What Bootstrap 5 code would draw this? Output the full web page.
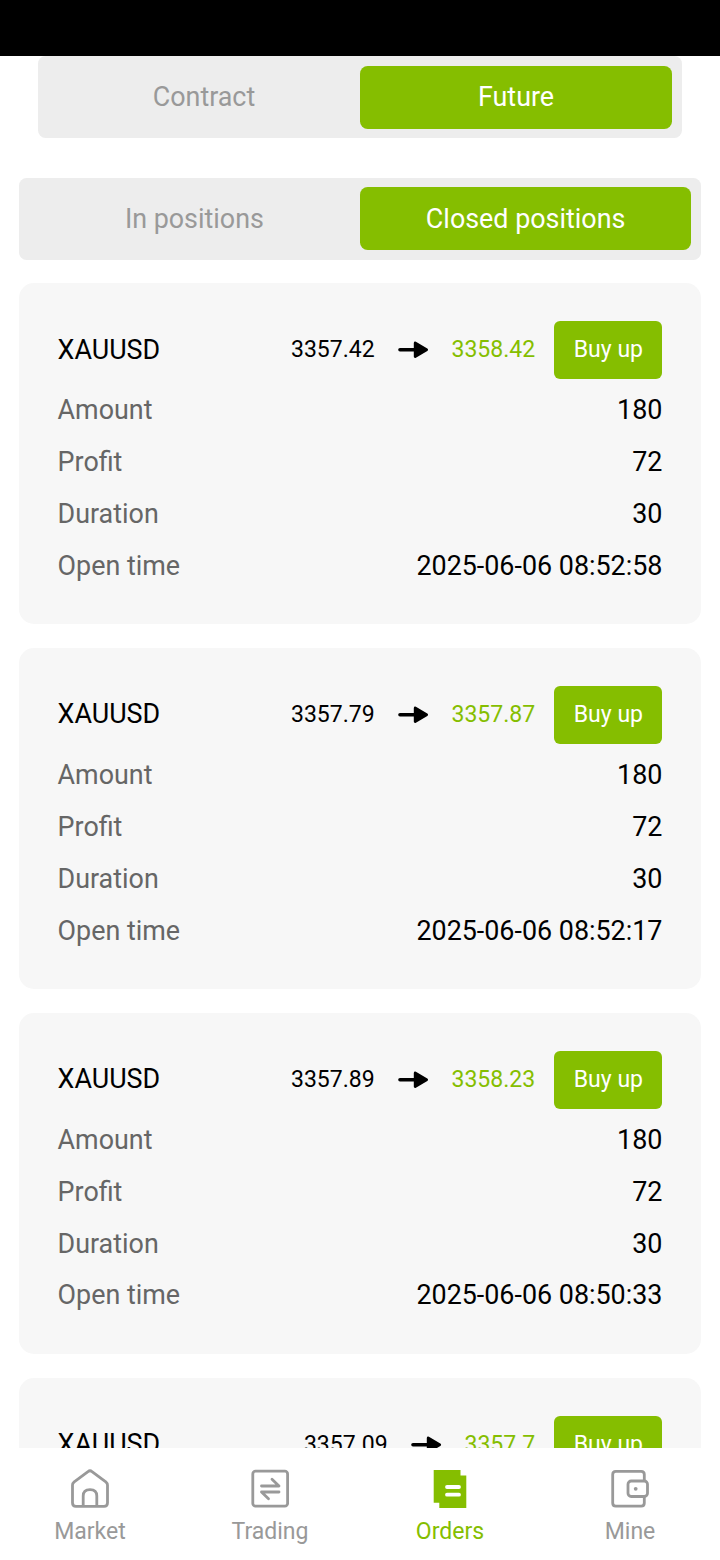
<!DOCTYPE html>
<html lang="en">
<head>
<meta charset="utf-8">
<meta name="viewport" content="width=device-width, initial-scale=1">
<title>Orders</title>
<link href="https://cdn.jsdelivr.net/npm/bootstrap@5.3.0/dist/css/bootstrap.min.css" rel="stylesheet">
<style>
  :root { --lime: #85be00; }
  body { font-family: Roboto, sans-serif; font-size: 26.88px; line-height: 1.2; color: #000; background: #fff; }
  .screen { height: 1560px; }
  .status-strip { height: 56.3px; background: #000; }
  .segmented { height: 82.2px; padding: 9.6px; background: #ededed; border-radius: 7.7px; color: #999; }
  .segmented.inset { margin: 0 19.2px 39.2px; }
  .segmented .on { background: var(--lime); color: #fff; border-radius: 7.7px; }
  .feed { padding: 0 19.2px; }
  .order { height: 341px; margin-top: 23.8px; padding: 38px 38.4px 0; background: #f7f7f7; border-radius: 15px; }
  .order:first-child { margin-top: 23.5px; }
  .order-head { height: 57.6px; margin-bottom: 5.6px; }
  .order-head > .me-auto { margin-top: -1px; }
  .price { font-size: 23.04px; }
  .arrow { width: 32px; height: 20px; margin: 0 22.4px; }
  .side { font-size: 23.04px; height: 57.6px; width: 108px; margin-left: 19.2px; background: var(--lime); color: #fff; border-radius: 6px; }
  .field { height: 51.84px; }
  .field dt { color: #666; font-weight: 400; }
  .field dd { margin: 0; }
  .tabs { height: 112px; background: #fff; color: #999; font-size: 23.04px; padding-top: 19px; }
  .tabs svg { width: 44px; height: 44px; margin-bottom: 7px; }
  .lime { color: var(--lime); }
</style>
</head>
<body>
<div class="screen d-flex flex-column overflow-hidden">
  <div class="status-strip flex-shrink-0"></div>
  <main class="feed flex-grow-1 overflow-hidden">
    <div class="segmented inset d-flex text-center">
      <div class="w-50 d-flex align-items-center justify-content-center">Contract</div>
      <div class="on w-50 d-flex align-items-center justify-content-center">Future</div>
    </div>
    <div class="segmented d-flex text-center">
      <div class="w-50 d-flex align-items-center justify-content-center">In positions</div>
      <div class="on w-50 d-flex align-items-center justify-content-center">Closed positions</div>
    </div>
    <div id="orders"></div>
  </main>
  <nav class="tabs d-flex flex-shrink-0 text-center">
    <div class="w-25 d-flex flex-column align-items-center">
      <svg viewBox="0 0 44 44" fill="none" stroke="currentColor" stroke-width="2.8" stroke-linejoin="round"><path d="M4.5 18.2Q4.5 16.2 6.2 14.8L20 4.6Q22 3 24 4.6L37.8 14.8Q39.5 16.2 39.5 18.2V35.8Q39.5 39.4 36 39.4H8Q4.5 39.4 4.5 35.8Z"/><path d="M15.2 39V29Q15.2 22.6 22 22.6T28.8 29V39"/></svg>
      Market
    </div>
    <div class="w-25 d-flex flex-column align-items-center">
      <svg viewBox="0 0 44 44" fill="none" stroke="currentColor" stroke-width="2.8" stroke-linecap="round" stroke-linejoin="round"><rect x="4.8" y="4.2" width="34.8" height="35" rx="2.8"/><path d="M13.5 19H31L24 12.2M31 25H13.5L20.5 31.8"/></svg>
      Trading
    </div>
    <div class="lime w-25 d-flex flex-column align-items-center">
      <svg viewBox="0 0 44 44"><path fill="currentColor" d="M5.7 3H32.5V8.5H38.3V41H11.3V35.7H5.7Z"/><path stroke="#fff" stroke-width="3.8" stroke-linecap="round" d="M19 20H31M19 27.7H31"/></svg>
      Orders
    </div>
    <div class="w-25 d-flex flex-column align-items-center">
      <svg viewBox="0 0 44 44" fill="none" stroke="currentColor" stroke-width="2.8" stroke-linejoin="round"><path d="M36.3 14V7.5Q36.3 4.4 33.2 4.4H7.8Q4.7 4.4 4.7 7.5V36Q4.7 39.2 7.8 39.2H33.2Q36.3 39.2 36.3 36V30"/><rect x="20" y="14" width="19.5" height="15.5" rx="3.2"/><circle cx="27.7" cy="21.8" r="1.9" fill="currentColor" stroke="none"/></svg>
      Mine
    </div>
  </nav>
</div>
<template id="order-card">
  <article class="order">
    <div class="order-head d-flex align-items-center">
      <span class="me-auto">XAUUSD</span>
      <span class="price" data-k="from"></span>
      <svg class="arrow" viewBox="0 0 32 20"><path d="M3 9.8H17" stroke="#000" stroke-width="3.6" stroke-linecap="round"/><path d="M18.2 3L29.6 9.8L18.2 16.6Z" stroke="#000" stroke-width="2.8" stroke-linejoin="round"/></svg>
      <span class="price lime" data-k="to"></span>
      <span class="side d-flex align-items-center justify-content-center">Buy up</span>
    </div>
    <dl class="mb-0">
      <div class="field d-flex align-items-center justify-content-between"><dt>Amount</dt><dd>180</dd></div>
      <div class="field d-flex align-items-center justify-content-between"><dt>Profit</dt><dd>72</dd></div>
      <div class="field d-flex align-items-center justify-content-between"><dt>Duration</dt><dd>30</dd></div>
      <div class="field d-flex align-items-center justify-content-between"><dt>Open time</dt><dd data-k="time"></dd></div>
    </dl>
  </article>
</template>
<script src="https://cdn.jsdelivr.net/npm/bootstrap@5.3.0/dist/js/bootstrap.bundle.min.js"></script>
<script>
  // The last card runs under the tab bar, so only its heading row is filled in.
  const orders = [
    { from: '3357.42', to: '3358.42', time: '2025-06-06 08:52:58' },
    { from: '3357.79', to: '3357.87', time: '2025-06-06 08:52:17' },
    { from: '3357.89', to: '3358.23', time: '2025-06-06 08:50:33' },
    { from: '3357.09', to: '3357.7' }
  ];
  const tpl = document.getElementById('order-card');
  for (const o of orders) {
    const card = tpl.content.cloneNode(true);
    card.querySelectorAll('[data-k]').forEach(el => { el.textContent = o[el.dataset.k] || ''; });
    if (!o.time) card.querySelector('dl').replaceChildren();
    document.getElementById('orders').append(card);
  }
</script>
</body>
</html>
